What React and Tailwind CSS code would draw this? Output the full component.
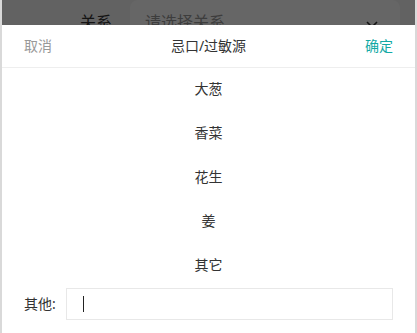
import React from "react";

const options = ["大葱", "香菜", "花生", "姜", "其它"];

const App = () => {
  return (
    <div
      className="relative h-[333px] w-full overflow-hidden border-x-2 border-[#d9d9d9] bg-[#f5f5f5]"
      style={{ fontFamily: '"Noto Sans", "Noto Sans CJK SC", sans-serif' }}
    >
      {/* Page behind the sheet */}
      <div className="flex items-center pl-[78px] pr-[15px]">
        <span className="w-[50px] text-[16px] text-[#333]">关系</span>
        <div className="flex h-[44px] flex-1 items-center justify-between rounded-lg bg-white pl-[15px] pr-[22px]">
          <span className="text-[16px] text-[#999]">请选择关系</span>
          <svg width="12" height="8" viewBox="0 0 12 8" className="mt-[6px]">
            <path d="M1 1l5 5 5-5" fill="none" stroke="#333" strokeWidth="1.6" />
          </svg>
        </div>
      </div>

      {/* Mask */}
      <div className="absolute inset-0 bg-black/60" />

      {/* Bottom sheet */}
      <div className="absolute inset-x-0 bottom-0 bg-white">
        <div className="flex h-[43px] items-center justify-between border-b border-[#eeeeee] px-[22px] text-[14px] leading-none">
          <span className="text-[#999]">取消</span>
          <span className="text-[#333]">忌口/过敏源</span>
          <span className="text-[#13aaa5]">确定</span>
        </div>

        <ul>
          {options.map((item) => (
            <li key={item} className="flex h-[44px] items-center justify-center pb-[2px] text-[14px] leading-none text-[#333]">
              {item}
            </li>
          ))}
        </ul>

        <div className="flex items-center px-[22px] pb-[13px]">
          <span className="w-[42px] text-[14px] leading-none text-[#333]">其他:</span>
          <div className="flex h-[32px] flex-1 items-center border border-[#e8e8e8] pl-[16px]">
            <span className="h-[16px] w-px bg-[#222]" />
          </div>
        </div>
      </div>
    </div>
  );
};

export default App;
